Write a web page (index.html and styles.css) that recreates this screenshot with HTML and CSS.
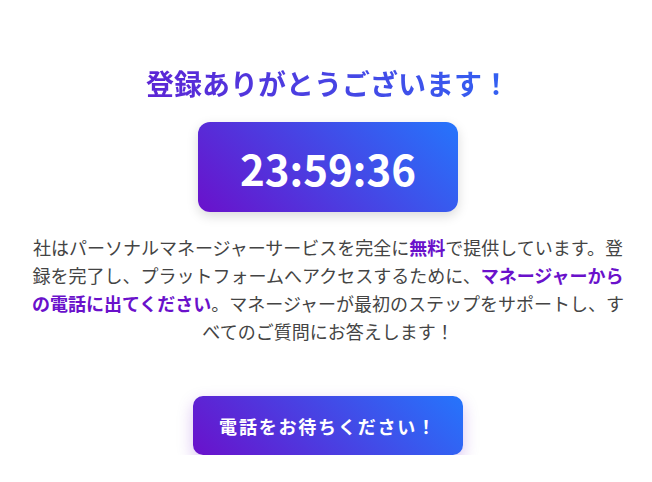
FILE: index.html
```html
<!DOCTYPE html>
<html lang="ja">
<head>
    <meta charset="UTF-8">
    <meta name="viewport" content="width=device-width, initial-scale=1.0">
    <title>登録完了</title>
    <link rel="stylesheet" href="styles.css">
</head>
<body>
    <div class="container">
        <h1 class="title">登録ありがとうございます！</h1>

        <div class="timer">23:59:36</div>

        <p class="message">
            社はパーソナルマネージャーサービスを完全に<strong>無料</strong>で提供しています。登録を完了し、プラットフォームへアクセスするために、<strong>マネージャーからの電話に出てください</strong>。マネージャーが最初のステップをサポートし、すべてのご質問にお答えします！
        </p>

        <button class="btn">電話をお待ちください！</button>
    </div>
</body>
</html>
```

FILE: styles.css
```css
:root {
    --purple: #6a11cb;
    --blue: #2575fc;
    --text: #444444;
}

* {
    margin: 0;
    padding: 0;
    box-sizing: border-box;
}

body {
    background-color: #ffffff;
    font-family: 'Noto Sans CJK JP', 'Noto Sans', sans-serif;
    color: var(--text);
    padding-left: 4px;
}

.container {
    max-width: 600px;
    margin: 0 auto;
    padding-top: 63px;
    display: flex;
    flex-direction: column;
    align-items: center;
    text-align: center;
}

.title {
    align-self: stretch;
    font-size: 28px;
    font-weight: 700;
    line-height: 40px;
    background: linear-gradient(90deg, var(--purple), var(--blue));
    -webkit-background-clip: text;
    background-clip: text;
    color: transparent;
    margin-bottom: 19px;
}

.timer {
    width: 260px;
    height: 90px;
    display: flex;
    align-items: center;
    justify-content: center;
    border-radius: 12px;
    background: linear-gradient(45deg, var(--purple), var(--blue));
    color: #ffffff;
    font-size: 42px;
    font-weight: 700;
    box-shadow: 0 4px 12px rgba(0, 0, 0, 0.15);
    margin-bottom: 21px;
}

.message {
    font-size: 18px;
    line-height: 28px;
    margin-bottom: 51px;
}

.message strong {
    color: var(--purple);
    font-weight: 700;
}

.btn {
    width: 270px;
    height: 59px;
    border: none;
    border-radius: 10px;
    background: linear-gradient(45deg, var(--purple), var(--blue));
    color: #ffffff;
    font-family: inherit;
    font-size: 18px;
    font-weight: 700;
    letter-spacing: 1.8px;
    box-shadow: 0 6px 16px rgba(106, 17, 203, 0.25);
    cursor: pointer;
}
```
